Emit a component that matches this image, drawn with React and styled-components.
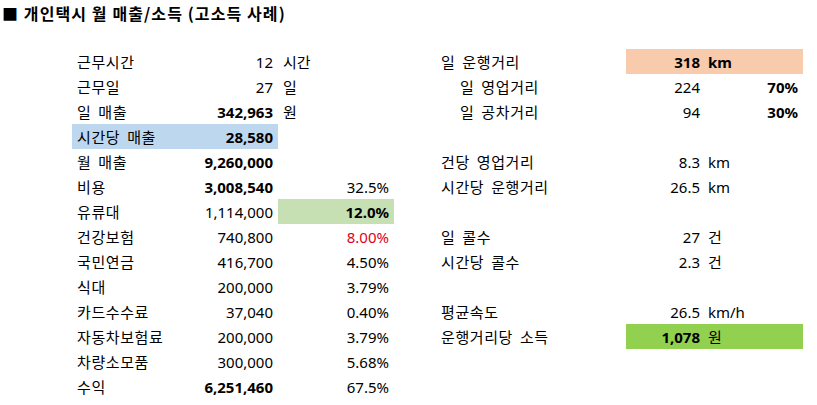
import React from "react";
import styled, { createGlobalStyle } from "styled-components";

const Global = createGlobalStyle`
  html, body { margin: 0; padding: 0; background: #fff; }
  body { font-family: "Noto Sans", "Noto Sans CJK KR", sans-serif; color: #000; }
`;

const Page = styled.div`
  width: 817px;
  height: 405px;
  overflow: hidden;
  background: #fff;
`;

const Title = styled.h1`
  margin: 0;
  height: 26px;
  line-height: 26px;
  padding-left: 2px;
  font-size: 16px;
  font-weight: 700;
  letter-spacing: 1.1px;
  white-space: nowrap;
  font-family: "Noto Sans CJK KR", sans-serif;
`;

const Sheets = styled.div`
  display: flex;
  margin-top: 23px;
  padding-left: 72px;
  gap: 42px;
`;

const Grid = styled.div`
  display: grid;
  grid-template-columns: ${(p) => p.$cols};
  grid-auto-rows: 25px;
  font-size: 15px;
`;

const Cell = styled.div`
  display: flex;
  align-items: center;
  justify-content: ${(p) => (p.$right ? "flex-end" : "flex-start")};
  padding: ${(p) => (p.$right ? "0 5px 0 0" : `0 0 0 ${p.$indent ? 24 : 5}px`)};
  background: ${(p) => p.$bg || "transparent"};
  font-weight: ${(p) => (p.$bold ? 700 : 400)};
  color: ${(p) => p.$color || "#000"};
  white-space: nowrap;
  overflow: visible;
`;

const Label = styled(Cell)`
  font-family: "Noto Sans CJK KR", sans-serif;
  letter-spacing: 0.6px;
  word-spacing: 3px;
`;

const Unit = styled(Cell)`
  font-family: "Noto Sans", "Noto Sans CJK KR", sans-serif;
`;

const BLUE = "#BDD7EE";
const LGREEN = "#C6E0B4";
const ORANGE = "#F8CBAD";
const GREEN = "#92D050";
const RED = "#E00020";

const leftRows = [
  { l: "근무시간", v: "12", u: "시간" },
  { l: "근무일", v: "27", u: "일" },
  { l: "일 매출", v: "342,963", u: "원", vb: true },
  { l: "시간당 매출", v: "28,580", vb: true, bg: BLUE },
  { l: "월 매출", v: "9,260,000", vb: true },
  { l: "비용", v: "3,008,540", vb: true, p: "32.5%" },
  { l: "유류대", v: "1,114,000", p: "12.0%", pb: true, pbg: LGREEN },
  { l: "건강보험", v: "740,800", p: "8.00%", pc: RED },
  { l: "국민연금", v: "416,700", p: "4.50%" },
  { l: "식대", v: "200,000", p: "3.79%" },
  { l: "카드수수료", v: "37,040", p: "0.40%" },
  { l: "자동차보험료", v: "200,000", p: "3.79%" },
  { l: "차량소모품", v: "300,000", p: "5.68%" },
  { l: "수익", v: "6,251,460", vb: true, p: "67.5%" },
];

const rightRows = [
  { l: "일 운행거리", v: "318", u: "km", vb: true, ub: true, bg: ORANGE },
  { l: "일 영업거리", ind: true, v: "224", p: "70%" },
  { l: "일 공차거리", ind: true, v: "94", p: "30%" },
  {},
  { l: "건당 영업거리", v: "8.3", u: "km" },
  { l: "시간당 운행거리", v: "26.5", u: "km" },
  {},
  { l: "일 콜수", v: "27", u: "건" },
  { l: "시간당 콜수", v: "2.3", u: "건" },
  {},
  { l: "평균속도", v: "26.5", u: "km/h" },
  { l: "운행거리당 소득", v: "1,078", u: "원", vb: true, bg: GREEN },
];

export default function App() {
  return (
    <Page>
      <Global />
      <Title>■ 개인택시 월 매출/소득 (고소득 사례)</Title>
      <Sheets>
        <Grid $cols="128px 78px 42px 74px">
          {leftRows.map((r, i) => (
            <React.Fragment key={i}>
              <Label $bg={r.bg}>{r.l}</Label>
              <Cell $right $bold={r.vb} $bg={r.bg}>{r.v}</Cell>
              <Unit $bg={r.pbg}>{r.u}</Unit>
              <Cell $right $bold={r.pb} $color={r.pc} $bg={r.pbg}>{r.p}</Cell>
            </React.Fragment>
          ))}
        </Grid>
        <Grid $cols="190px 77px 37px 63px">
          {rightRows.map((r, i) => (
            <React.Fragment key={i}>
              <Label $indent={r.ind}>{r.l}</Label>
              <Cell $right $bold={r.vb} $bg={r.bg} style={{ paddingRight: 3 }}>{r.v}</Cell>
              <Unit $bold={r.ub} $bg={r.bg}>{r.u}</Unit>
              <Cell $right $bold $bg={r.bg}>{r.p}</Cell>
            </React.Fragment>
          ))}
        </Grid>
      </Sheets>
    </Page>
  );
}
